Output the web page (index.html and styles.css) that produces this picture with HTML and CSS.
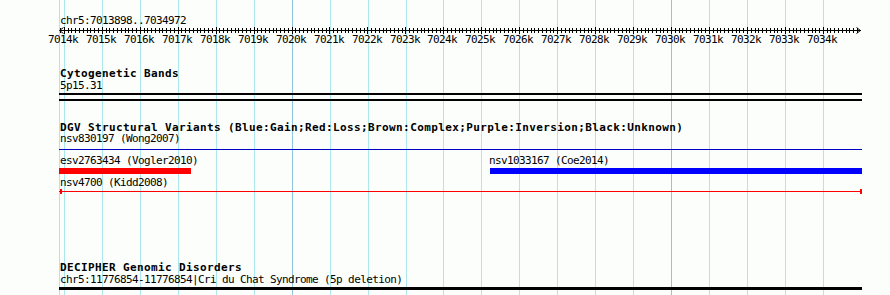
FILE: index.html
```html
<!DOCTYPE html>
<html>
<head>
<meta charset="utf-8">
<title>chr5:7013898..7034972</title>
<link rel="stylesheet" href="styles.css">
</head>
<body>
<div class="canvas">
  <svg class="grid" width="890" height="295" shape-rendering="crispEdges">
    <rect class="gl" x="59" y="0" width="1" height="295"/>
    <rect class="gl" x="64" y="0" width="1" height="295"/>
    <rect class="gl" x="102" y="0" width="1" height="295"/>
    <rect class="gl" x="140" y="0" width="1" height="295"/>
    <rect class="gl" x="178" y="0" width="1" height="295"/>
    <rect class="gl" x="216" y="0" width="1" height="295"/>
    <rect class="gl" x="254" y="0" width="1" height="295"/>
    <rect class="gl dark" x="292" y="0" width="1" height="295"/>
    <rect class="gl" x="330" y="0" width="1" height="295"/>
    <rect class="gl" x="368" y="0" width="1" height="295"/>
    <rect class="gl" x="406" y="0" width="1" height="295"/>
    <rect class="gl" x="443" y="0" width="1" height="295"/>
    <rect class="gl" x="481" y="0" width="1" height="295"/>
    <rect class="gl" x="519" y="0" width="1" height="295"/>
    <rect class="gl" x="557" y="0" width="1" height="295"/>
    <rect class="gl" x="595" y="0" width="1" height="295"/>
    <rect class="gl" x="633" y="0" width="1" height="295"/>
    <rect class="gl dark" x="671" y="0" width="1" height="295"/>
    <rect class="gl" x="709" y="0" width="1" height="295"/>
    <rect class="gl" x="747" y="0" width="1" height="295"/>
    <rect class="gl" x="785" y="0" width="1" height="295"/>
    <rect class="gl" x="823" y="0" width="1" height="295"/>
  </svg>

  <div class="tracks">
    <div class="txt">chr5:7013898..7034972</div>
    <svg class="ruler" width="803" height="20">
      <g id="ticks" shape-rendering="crispEdges"></g>
      <rect class="axis" x="1" y="3" width="801" height="1" shape-rendering="crispEdges"/>
      <polyline class="arrow" points="4.5,0.5 0.5,3.5 4.5,6.5"/>
      <polyline class="arrow" points="797.5,0.5 801.5,3.5 797.5,6.5"/>
      <g class="tick-labels">
        <text x="-11" y="16">7014k</text>
        <text x="27" y="16">7015k</text>
        <text x="65" y="16">7016k</text>
        <text x="103" y="16">7017k</text>
        <text x="141" y="16">7018k</text>
        <text x="179" y="16">7019k</text>
        <text x="217" y="16">7020k</text>
        <text x="255" y="16">7021k</text>
        <text x="293" y="16">7022k</text>
        <text x="331" y="16">7023k</text>
        <text x="368" y="16">7024k</text>
        <text x="406" y="16">7025k</text>
        <text x="444" y="16">7026k</text>
        <text x="482" y="16">7027k</text>
        <text x="520" y="16">7028k</text>
        <text x="558" y="16">7029k</text>
        <text x="596" y="16">7030k</text>
        <text x="634" y="16">7031k</text>
        <text x="672" y="16">7032k</text>
        <text x="710" y="16">7033k</text>
        <text x="748" y="16">7034k</text>
      </g>
    </svg>

    <div class="txt title gap-title1">Cytogenetic Bands</div>
    <div class="txt">5p15.31</div>
    <div class="band"></div>

    <div class="txt title gap-title2 h11">DGV Structural Variants (Blue:Gain;Red:Loss;Brown:Complex;Purple:Inversion;Black:Unknown)</div>
    <div class="txt">nsv830197 (Wong2007)</div>
    <div class="hline-blue"></div>

    <div class="feat-row">
      <div class="feat" style="margin-left:0;width:132px">
        <div class="txt">esv2763434 (Vogler2010)</div>
        <div class="bar red"></div>
      </div>
      <div class="feat" style="margin-left:299px;width:372px">
        <div class="txt shift">nsv1033167 (Coe2014)</div>
        <div class="bar blue"></div>
      </div>
    </div>

    <div class="txt gap-small">nsv4700 (Kidd2008)</div>
    <div class="span-red"></div>

    <div class="txt title gap-title3">DECIPHER Genomic Disorders</div>
    <div class="txt">chr5:11776854-11776854|Cri du Chat Syndrome (5p deletion)</div>
    <div class="bar-black"></div>
  </div>
</div>
<script src="script.js"></script>
</body>
</html>
```

FILE: styles.css
```css
html, body {
  margin: 0;
  padding: 0;
  background: #fbfefb;
}

.canvas {
  position: relative;
  width: 890px;
  height: 295px;
  overflow: hidden;
  font-family: "DejaVu Sans Mono", "Liberation Mono", monospace;
  color: #000;
}

.grid {
  position: absolute;
  left: 0;
  top: 0;
}

.gl {
  fill: #ade7ee;
}

.gl.dark {
  fill: #8ec5e0;
}

.tracks {
  position: relative;
  margin-left: 59px;
  width: 803px;
  padding-top: 15px;
}

.txt {
  height: 12px;
  line-height: 12px;
  font-size: 11px;
  letter-spacing: -0.62px;
  padding-left: 1px;
  white-space: nowrap;
}

.txt.title {
  font-weight: bold;
  letter-spacing: 0.38px;
}

.txt.h11 {
  height: 11px;
}

.txt.shift {
  padding-left: 0;
  margin-left: -1px;
}

.ruler {
  display: block;
  overflow: visible;
}

.axis,
#ticks rect {
  fill: #000;
}

.arrow {
  fill: none;
  stroke: #000;
  stroke-width: 1;
}

.tick-labels text {
  font-family: "DejaVu Sans Mono", "Liberation Mono", monospace;
  font-size: 11px;
  letter-spacing: -0.62px;
  fill: #000;
}

.gap-title1 {
  margin-top: 21px;
}

.band {
  margin-top: 1px;
  height: 4px;
  border-top: 2px solid #000;
  border-bottom: 2px solid #000;
}

.gap-title2 {
  margin-top: 21px;
}

.hline-blue {
  margin-top: 4px;
  height: 1px;
  background: #0000c0;
}

.feat-row {
  display: flex;
  margin-top: 5px;
}

.feat {
  flex: none;
  display: flex;
  flex-direction: column;
}

.bar {
  margin-top: 1px;
  height: 6px;
}

.bar.red {
  background: #ff0000;
}

.bar.blue {
  background: #0000ff;
}

.gap-small {
  margin-top: 3px;
}

.span-red {
  height: 5px;
  background:
    linear-gradient(#ff0000, #ff0000) 0 2px / 100% 1px no-repeat,
    linear-gradient(#ff0000, #ff0000) 1px 0 / 2px 5px no-repeat,
    linear-gradient(#ff0000, #ff0000) right 0 top 0 / 2px 5px no-repeat;
}

.gap-title3 {
  margin-top: 68px;
}

.bar-black {
  margin-top: 1px;
  height: 3px;
  background: #000;
}
```

FILE: script.js
```js
(function () {
  var g = document.getElementById('ticks');
  var ns = 'http://www.w3.org/2000/svg';
  for (var k = -1; k <= 209; k++) {
    var x = Math.floor(64.3 + 3.7955 * k) - 59;
    var major = (k % 10 === 0);
    var r = document.createElementNS(ns, 'rect');
    r.setAttribute('x', x);
    r.setAttribute('y', major ? 0 : 1);
    r.setAttribute('width', 1);
    r.setAttribute('height', major ? 7 : 5);
    g.appendChild(r);
  }
})();
```
